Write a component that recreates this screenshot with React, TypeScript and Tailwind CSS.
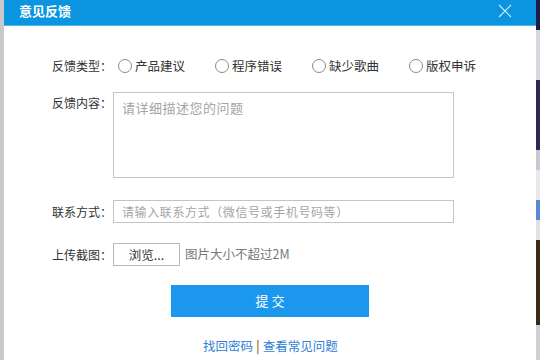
import React from "react";

const font = { fontFamily: '"Noto Sans CJK SC", "Noto Sans", sans-serif' };

function Radio({ label }: { label: string }) {
  return (
    <div className="flex w-[97px] shrink-0 items-center">
      <span className="h-[14px] w-[14px] shrink-0 rounded-full border border-[#8a8a8a] bg-white" />
      <span className="ml-[3px] whitespace-nowrap text-[12.5px] leading-none text-[#333]">{label}</span>
    </div>
  );
}

function Label({ children, className = "" }: { children: React.ReactNode; className?: string }) {
  return (
    <span className={"w-[61px] shrink-0 whitespace-nowrap text-[12px] leading-none text-[#333] " + className}>
      {children}
    </span>
  );
}

export default function App() {
  return (
    <div className="flex h-[360px] w-[540px] overflow-hidden bg-white" style={font}>
      <div className="w-[4px] shrink-0 bg-[#c9c9c9]" />
      <div className="flex flex-1 flex-col">
        <div className="flex h-[26px] shrink-0 items-start justify-between border-b border-[#4fb6ee] bg-[#0b95e1] pl-[15px] pr-[24px]">
          <span className="mt-[3px] text-[13px] font-bold leading-[16px] text-white">意见反馈</span>
          <svg className="mt-[4px]" width="14" height="14" viewBox="0 0 14 14">
            <path d="M1 1 L13 13 M13 1 L1 13" stroke="#cfeafc" strokeWidth="1.1" />
          </svg>
        </div>
        <div className="flex flex-1 flex-col pl-[48px]">
          <div className="mt-[32px] flex h-[16px] items-center">
            <Label className="w-[66px]">反馈类型：</Label>
            <Radio label="产品建议" />
            <Radio label="程序错误" />
            <Radio label="缺少歌曲" />
            <Radio label="版权申诉" />
          </div>
          <div className="mt-[18px] flex items-start">
            <Label className="mt-[5px]">反馈内容：</Label>
            <div className="h-[86px] w-[341px] border border-[#c4c4c4] px-[8px] pt-[7px] text-[13px] leading-[16px] tracking-[0.5px] text-[#a5a5a5]">
              请详细描述您的问题
            </div>
          </div>
          <div className="mt-[22px] flex items-center">
            <Label>联系方式：</Label>
            <div className="flex h-[23px] w-[341px] items-center whitespace-nowrap border border-[#c4c4c4] px-[8px] text-[12px] tracking-[0.6px] text-[#a5a5a5]">
              请输入联系方式（微信号或手机号码等）
            </div>
          </div>
          <div className="mt-[20px] flex items-center">
            <Label>上传截图：</Label>
            <div className="flex h-[23px] w-[67px] items-center justify-center border border-[#b8b8b8] bg-white pt-[2px] text-[12.5px] text-[#333]">
              浏览...
            </div>
            <span className="ml-[5px] text-[12.5px] text-[#777]">图片大小不超过2M</span>
          </div>
          <div className="ml-[119px] mt-[19px] flex h-[32px] w-[198px] items-center justify-center bg-[#1b97ee] text-[13px] text-white">
            提 交
          </div>
          <div className="ml-[151px] mt-[22px] flex items-center text-[12.5px] leading-[14px]">
            <span className="text-[#2f80d6]">找回密码</span>
            <span className="mx-[3px] font-bold text-[#9a7a4a]">|</span>
            <span className="text-[#2f80d6]">查看常见问题</span>
          </div>
        </div>
      </div>
      <div className="flex w-[4px] shrink-0 flex-col">
        <div className="h-[30px] bg-[#1d1d4a]" />
        <div className="h-[50px] bg-[#d8d8e0]" />
        <div className="h-[70px] bg-[#2a2a55]" />
        <div className="h-[20px] bg-[#c8c8d0]" />
        <div className="h-[30px] bg-[#e8e8ee]" />
        <div className="h-[20px] bg-[#5a8ad0]" />
        <div className="h-[20px] bg-[#e0e0e0]" />
        <div className="h-[85px] bg-[#3a2a1a]" />
        <div className="flex-1 bg-[#d0d0d0]" />
      </div>
    </div>
  );
}
